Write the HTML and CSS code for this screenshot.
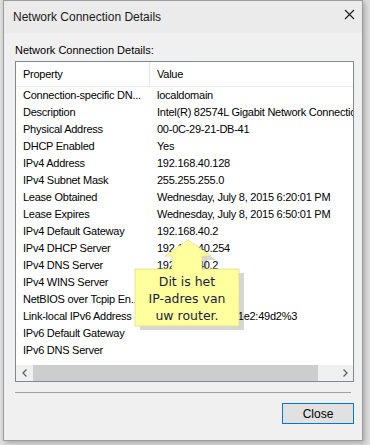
FILE: index.html
```html
<!DOCTYPE html>
<html lang="nl">
<head>
    <meta charset="UTF-8">
    <title>Network Connection Details</title>
    <link rel="stylesheet" href="styles.css">
</head>
<body>
    <div class="window">
        <div class="titlebar">
            <span class="title">Network Connection Details</span>
            <svg class="close-x" width="11" height="11" viewBox="0 0 11 11">
                <path d="M1 1 L10 10 M10 1 L1 10" stroke="#1a1a1a" stroke-width="1.1" fill="none"/>
            </svg>
        </div>
        <div class="content">
            <div class="label">Network Connection Details:</div>
            <div class="listbox">
                <div class="header">
                    <div class="col1">Property</div>
                    <div class="col2">Value</div>
                </div>
                <div class="rows">
                    <div class="row"><div class="col1">Connection-specific DN...</div><div class="col2">localdomain</div></div>
                    <div class="row"><div class="col1">Description</div><div class="col2">Intel(R) 82574L Gigabit Network Connection</div></div>
                    <div class="row"><div class="col1">Physical Address</div><div class="col2">00-0C-29-21-DB-41</div></div>
                    <div class="row"><div class="col1">DHCP Enabled</div><div class="col2">Yes</div></div>
                    <div class="row"><div class="col1">IPv4 Address</div><div class="col2">192.168.40.128</div></div>
                    <div class="row"><div class="col1">IPv4 Subnet Mask</div><div class="col2">255.255.255.0</div></div>
                    <div class="row"><div class="col1">Lease Obtained</div><div class="col2">Wednesday, July 8, 2015 6:20:01 PM</div></div>
                    <div class="row"><div class="col1">Lease Expires</div><div class="col2">Wednesday, July 8, 2015 6:50:01 PM</div></div>
                    <div class="row"><div class="col1">IPv4 Default Gateway</div><div class="col2">192.168.40.2</div></div>
                    <div class="row"><div class="col1">IPv4 DHCP Server</div><div class="col2">192.168.40.254</div></div>
                    <div class="row"><div class="col1">IPv4 DNS Server</div><div class="col2">192.168.40.2</div></div>
                    <div class="row"><div class="col1">IPv4 WINS Server</div><div class="col2"></div></div>
                    <div class="row"><div class="col1">NetBIOS over Tcpip En...</div><div class="col2">Yes</div></div>
                    <div class="row"><div class="col1">Link-local IPv6 Address</div><div class="col2">fe80::8d0c:1a3f:b1e2:49d2%3</div></div>
                    <div class="row"><div class="col1">IPv6 Default Gateway</div><div class="col2"></div></div>
                    <div class="row"><div class="col1">IPv6 DNS Server</div><div class="col2"></div></div>
                </div>
                <div class="hscroll">
                    <span class="arrow">
                        <svg width="8" height="8" viewBox="0 0 8 8"><path d="M5.5 0.5 L2 4 L5.5 7.5" stroke="#606060" stroke-width="1.3" fill="none"/></svg>
                    </span>
                    <div class="track"><div class="thumb"></div></div>
                    <span class="arrow">
                        <svg width="8" height="8" viewBox="0 0 8 8"><path d="M2.5 0.5 L6 4 L2.5 7.5" stroke="#606060" stroke-width="1.3" fill="none"/></svg>
                    </span>
                </div>
            </div>
            <div class="separator"></div>
            <div class="footer">
                <button class="btn">Close</button>
            </div>
        </div>
    </div>

    <div class="callout">
        <svg class="callout-shape" width="120" height="100" viewBox="0 0 120 100">
            <polygon points="5,33 42,33 42,20 35,20 58,4 81,20 72,20 72,33 109,33 109,90 5,90"
                     transform="translate(5,4)" fill="#000" opacity="0.16"/>
            <polygon points="5,33 42,33 42,20 35,20 58,4 81,20 72,20 72,33 109,33 109,90 5,90"
                     fill="#ffff9e" stroke="#e2dc8c" stroke-width="0.8"/>
        </svg>
        <div class="callout-text">Dit is het<br>IP-adres van<br>uw router.</div>
    </div>
</body>
</html>
```

FILE: styles.css
```css
* {
    box-sizing: border-box;
    margin: 0;
    padding: 0;
}
body {
    background-color: #dedede;
    font-family: "Liberation Sans", Arial, sans-serif;
    color: #000;
    width: 370px;
    height: 445px;
    overflow: hidden;
}
.window {
    margin-left: 3px;
    width: 360px;
    height: 441px;
    background-color: #f0f0f0;
    border: 1px solid #9c9c9c;
    box-shadow: 2px 2px 5px rgba(0, 0, 0, 0.25);
}
.titlebar {
    height: 32px;
    background-color: #ebebeb;
    display: flex;
    justify-content: space-between;
    align-items: center;
    padding-left: 9px;
    padding-right: 7px;
}
.title {
    font-size: 12px;
    color: #1a1a1a;
}
.close-x {
    display: block;
    margin-top: -6px;
}
.content {
    padding: 10px 8px 0 11px;
}
.label {
    font-size: 11px;
    line-height: 14px;
    height: 14px;
    margin-bottom: 4px;
}
.listbox {
    height: 321px;
    background-color: #fff;
    border: 1px solid #828790;
    display: flex;
    flex-direction: column;
    font-size: 11px;
    letter-spacing: -0.25px;
}
.header {
    height: 25px;
    display: flex;
    align-items: stretch;
    border-bottom: 1px solid #ececec;
}
.header .col1, .header .col2 {
    display: flex;
    align-items: center;
}
.header .col1 {
    border-right: 1px solid #e5e5e5;
}
.rows {
    flex: 1;
}
.row {
    height: 17px;
    line-height: 17px;
    display: flex;
}
.col1 {
    width: 134px;
    flex-shrink: 0;
    padding-left: 7px;
    white-space: nowrap;
    overflow: hidden;
}
.col2 {
    flex: 1;
    padding-left: 7px;
    white-space: nowrap;
    overflow: hidden;
}
.hscroll {
    height: 16px;
    background-color: #f0f0f0;
    display: flex;
    align-items: center;
}
.arrow {
    width: 17px;
    height: 16px;
    display: flex;
    justify-content: center;
    align-items: center;
}
.track {
    flex: 1;
    height: 16px;
}
.thumb {
    height: 16px;
    background-color: #cdcdcd;
    margin-right: 18px;
}
.separator {
    margin-top: 10px;
    margin-right: 3px;
    border-top: 1px solid #a0a0a0;
}
.footer {
    margin-top: 10px;
    display: flex;
    justify-content: flex-end;
}
.btn {
    width: 72px;
    height: 21px;
    background-color: #e1e1e1;
    border: 1px solid #0078d7;
    font-family: "Liberation Sans", Arial, sans-serif;
    font-size: 12px;
    color: #000;
}
.callout {
    position: absolute;
    left: 130px;
    top: 236px;
    width: 120px;
    height: 100px;
}
.callout-shape {
    position: absolute;
    left: 0;
    top: 0;
}
.callout-text {
    position: absolute;
    left: 5px;
    top: 33px;
    width: 104px;
    padding-top: 4px;
    text-align: center;
    font-family: "DejaVu Sans", Verdana, sans-serif;
    font-size: 12.5px;
    line-height: 17px;
    color: #1c1c3a;
}
```
